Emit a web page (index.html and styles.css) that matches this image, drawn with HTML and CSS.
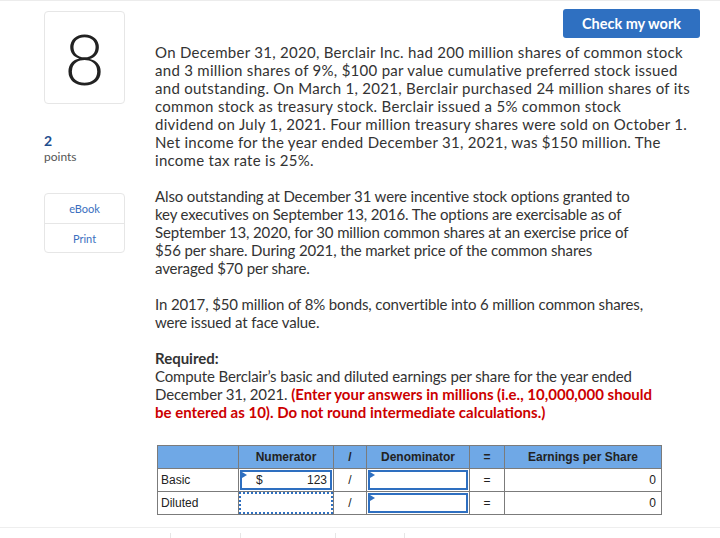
FILE: index.html
```html
<!DOCTYPE html>
<html lang="en">
<head>
<meta charset="utf-8">
<title>Question 8</title>
<link rel="stylesheet" href="styles.css">
</head>
<body>
<div class="topline"></div>
<div class="question">
  <aside class="side">
    <div class="qnum">8</div>
    <div class="points">
      <span class="pts-num">2</span>
      <span class="pts-label">points</span>
    </div>
    <div class="tools">
      <a class="tool">eBook</a>
      <a class="tool">Print</a>
    </div>
  </aside>
  <main class="content">
    <div class="actions"><button class="check">Check my work</button></div>
    <p class="para lead">On December 31, 2020, Berclair Inc. had 200 million shares of common stock<br>and 3 million shares of 9%, $100 par value cumulative preferred stock issued<br>and outstanding. On March 1, 2021, Berclair purchased 24 million shares of its<br>common stock as treasury stock. Berclair issued a 5% common stock<br>dividend on July 1, 2021. Four million treasury shares were sold on October 1.<br>Net income for the year ended December 31, 2021, was $150 million. The<br>income tax rate is 25%.</p>
    <p class="para">Also outstanding at December 31 were incentive stock options granted to<br>key executives on September 13, 2016. The options are exercisable as of<br>September 13, 2020, for 30 million common shares at an exercise price of<br>$56 per share. During 2021, the market price of the common shares<br>averaged $70 per share.</p>
    <p class="para">In 2017, $50 million of 8% bonds, convertible into 6 million common shares,<br>were issued at face value.</p>
    <p class="para"><strong class="req">Required:</strong><br>Compute Berclair’s basic and diluted earnings per share for the year ended<br>December 31, 2021. <strong class="warn">(Enter your answers in millions (i.e., 10,000,000 should<br>be entered as 10). Do not round intermediate calculations.)</strong></p>

    <table class="eps">
      <thead>
        <tr>
          <th class="c-label"></th>
          <th class="c-num">Numerator</th>
          <th class="c-op">/</th>
          <th class="c-den">Denominator</th>
          <th class="c-op2">=</th>
          <th class="c-eps">Earnings per Share</th>
        </tr>
      </thead>
      <tbody>
        <tr>
          <td class="lbl">Basic</td>
          <td class="inp"><div class="field solid flag"><span class="cur">$</span><span class="val">123</span></div></td>
          <td class="op">/</td>
          <td class="inp"><div class="field solid flag"></div></td>
          <td class="op">=</td>
          <td class="res">0</td>
        </tr>
        <tr>
          <td class="lbl">Diluted</td>
          <td class="inp"><div class="field dotted"></div></td>
          <td class="op">/</td>
          <td class="inp"><div class="field solid flag"></div></td>
          <td class="op">=</td>
          <td class="res">0</td>
        </tr>
      </tbody>
    </table>
  </main>
</div>
<div class="footer">
  <div class="fcol f1"></div>
  <div class="fcol f2"></div>
  <div class="fcol f3"></div>
  <div class="fcol f4"></div>
  <div class="fcol f5"></div>
</div>
</body>
</html>
```

FILE: styles.css
```css
* { box-sizing: border-box; }
html, body { margin: 0; padding: 0; background: #fff; }
body {
  font-family: Lato, "Open Sans", sans-serif;
  color: #333;
  width: 720px;
  height: 538px;
  overflow: hidden;
}
.topline { height: 1px; background: #ececec; }

.question {
  display: grid;
  grid-template-columns: 81px 1fr;
  column-gap: 30px;
  padding-left: 44px;
  height: 526px;
}

.side { display: flex; flex-direction: column; }
.qnum {
  margin-top: 10px;
  height: 93px;
  border: 1px solid #e6e6e6;
  border-radius: 4px;
  display: flex;
  align-items: center;
  justify-content: center;
  font-size: 70px;
  font-weight: 300;
  color: #222;
  line-height: 1;
}
.points { margin-top: 29px; display: flex; flex-direction: column; }
.pts-num { font-size: 14px; color: #1f4f8f; line-height: 16px; font-weight: 700; }
.pts-label { font-size: 12px; color: #555; line-height: 16px; }
.tools {
  margin-top: 28px;
  border: 1px solid #e6e6e6;
  border-radius: 4px;
  display: flex;
  flex-direction: column;
}
.tool {
  height: 29px;
  display: flex;
  align-items: center;
  justify-content: center;
  font-size: 11px;
  color: #3b6fc0;
}
.tool + .tool { border-top: 1px solid #e6e6e6; }

.content { padding-right: 20px; }
.actions { display: flex; justify-content: flex-end; padding-top: 8px; height: 42px; }
.check {
  width: 137px;
  height: 29px;
  border: none;
  border-radius: 3px;
  background: #2f70c1;
  color: #fff;
  font-family: Lato, sans-serif;
  font-weight: 700;
  font-size: 14.5px;
  padding: 0;
}
.para {
  margin: 0 0 18px;
  font-size: 15px;
  line-height: 18px;
  letter-spacing: -0.13px;
  white-space: nowrap;
}
.para.lead { letter-spacing: 0.28px; }
.req { color: #333; font-weight: 700; letter-spacing: 0; }
.warn { color: #c00; font-weight: 700; letter-spacing: 0; }

.eps {
  margin-top: 24px;
  margin-left: 2px;
  border-collapse: collapse;
  font-family: "Liberation Sans", Arial, sans-serif;
  font-size: 12px;
  color: #222;
}
.eps th, .eps td {
  border: 1px solid #7b7b7b;
  height: 23px;
  padding: 0;
}
.eps th { background: #6fa8e6; font-weight: 700; text-align: center; }
.c-label { width: 81px; }
.c-num { width: 95px; }
.c-op { width: 33px; }
.c-den { width: 103px; }
.c-op2 { width: 35px; }
.c-eps { width: 157px; }
.lbl { padding-left: 3px !important; }
.op { text-align: center; }
.res { text-align: right; padding-right: 5px !important; }
.inp { position: relative; }
.field {
  position: absolute;
  inset: 1px 1px 1px 1px;
  display: flex;
  align-items: center;
  justify-content: space-between;
  padding: 0 3px 0 14px;
}
.field.solid { border: 2px solid #2e6fc0; }
.field.dotted { inset: 0; border: 2px dotted #2e6fc0; }
.field.flag::before {
  content: "";
  position: absolute;
  left: 0;
  top: 0;
  border-top: 3px solid transparent;
  border-bottom: 3px solid transparent;
  border-left: 5px solid #2e6fc0;
}
.cur, .val { font-size: 12px; color: #222; }

.footer {
  border-top: 1px solid #eeeeee;
  height: 11px;
  display: flex;
  padding-top: 5px;
}
.fcol { height: 6px; }
.f1 { width: 171px; border-right: 1px solid #e6e6e6; }
.f2 { width: 70px; border-right: 1px solid #e6e6e6; }
.f3 { width: 95px; border-right: 1px solid #e6e6e6; }
.f4 { width: 69px; border-right: 1px solid #e6e6e6; }
```
